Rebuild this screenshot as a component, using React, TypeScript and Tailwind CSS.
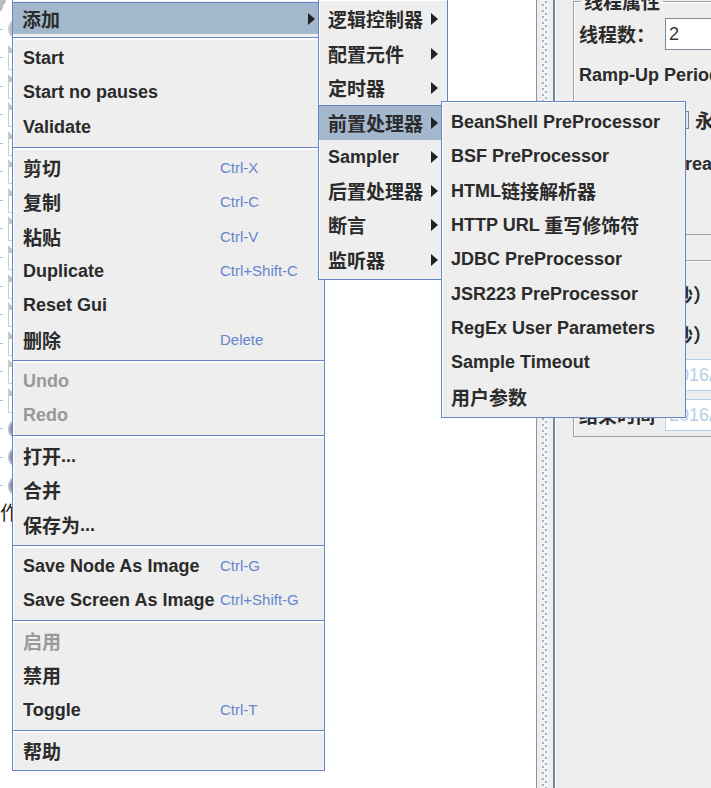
import type { ReactNode } from "react";

type Item = { label: string; accel?: string; disabled?: boolean; active?: boolean; arrow?: boolean };

const groups: { size: string; items: Item[] }[] = [
  { size: "h-[110px]", items: [{ label: "Start" }, { label: "Start no pauses" }, { label: "Validate" }] },
  {
    size: "h-[213px]",
    items: [
      { label: "剪切", accel: "Ctrl-X" },
      { label: "复制", accel: "Ctrl-C" },
      { label: "粘贴", accel: "Ctrl-V" },
      { label: "Duplicate", accel: "Ctrl+Shift-C" },
      { label: "Reset Gui" },
      { label: "删除", accel: "Delete" },
    ],
  },
  { size: "h-[75px]", items: [{ label: "Undo", disabled: true }, { label: "Redo", disabled: true }] },
  { size: "h-[110px]", items: [{ label: "打开..." }, { label: "合并" }, { label: "保存为..." }] },
  {
    size: "h-[75px]",
    items: [
      { label: "Save Node As Image", accel: "Ctrl-G" },
      { label: "Save Screen As Image", accel: "Ctrl+Shift-G" },
    ],
  },
  {
    size: "h-[110px]",
    items: [{ label: "启用", disabled: true }, { label: "禁用" }, { label: "Toggle", accel: "Ctrl-T" }],
  },
  { size: "h-[40px]", items: [{ label: "帮助" }] },
];

const addItems: Item[] = [
  { label: "逻辑控制器", arrow: true },
  { label: "配置元件", arrow: true },
  { label: "定时器", arrow: true },
  { label: "前置处理器", arrow: true, active: true },
  { label: "Sampler", arrow: true },
  { label: "后置处理器", arrow: true },
  { label: "断言", arrow: true },
  { label: "监听器", arrow: true },
];

const preProcessors: Item[] = [
  { label: "BeanShell PreProcessor" },
  { label: "BSF PreProcessor" },
  { label: "HTML链接解析器" },
  { label: "HTTP URL 重写修饰符" },
  { label: "JDBC PreProcessor" },
  { label: "JSR223 PreProcessor" },
  { label: "RegEx User Parameters" },
  { label: "Sample Timeout" },
  { label: "用户参数" },
];

// Chinese runs are set one pixel larger than Latin runs, on a slightly lower baseline.
function Mixed({ text }: { text: string }) {
  return (
    <span className="whitespace-pre">
      {text.split(/([\u3000-\u9fff\uff00-\uffef]+)/).map((run, i) =>
        i % 2 ? (
          <span key={i} className="align-[-2px] text-[19px] leading-5">
            {run}
          </span>
        ) : (
          run
        ),
      )}
    </span>
  );
}

function Arrow() {
  return (
    <svg viewBox="0 0 7 12" className="ml-auto h-3 w-[7px] shrink-0 fill-[#222]" aria-hidden="true">
      <path d="M0 0 L7 6 L0 12 Z" />
    </svg>
  );
}

function Row({ item }: { item: Item }) {
  return (
    <li role="none" className="flex min-h-0 flex-1">
      <button
        type="button"
        role="menuitem"
        disabled={item.disabled}
        className={`flex w-full items-center pr-[9px] pl-[9px] text-left leading-6 ${
          item.active ? "border-t border-[#6585cc] bg-[#a3b8cc]" : ""
        } ${item.disabled ? "text-[#999]" : "text-[#2b2b2b]"}`}
      >
        <span className={item.accel ? "w-[197px] shrink-0" : "shrink-0"}>
          <Mixed text={item.label} />
        </span>
        {item.accel && <span className="text-[15px] font-normal text-[#6585cc]">{item.accel}</span>}
        {item.arrow && <Arrow />}
      </button>
    </li>
  );
}

function Menu({ label, className, children }: { label: string; className: string; children: ReactNode }) {
  return (
    <ul
      role="menu"
      aria-label={label}
      className={`absolute flex flex-col border border-[#6585cc] bg-[#eee] shadow-[inset_1px_1px_0_#fff] ${className}`}
    >
      {children}
    </ul>
  );
}

function Tree() {
  return (
    <div className="w-[536px] shrink-0 bg-white">
      <div className="flex h-[15px] items-start">
        <svg viewBox="0 0 7 13" className="h-[13px] w-[7px]" aria-hidden="true">
          <path d="M0 0 H6 L5 4 L3 5 L3 8 L0 12 Z" fill="#bbb" />
        </svg>
      </div>
      <ul className="flex h-[485px] flex-col">
        {Array.from({ length: 17 }, (_, i) => (
          <li key={i} className="flex flex-1 items-center gap-[5px]">
            <span className="h-px w-[3px] bg-[#9fc0ea]" />
            {i === 0 || i > 13 ? (
              <svg viewBox="0 0 18 20" className="h-5 w-[18px]" aria-hidden="true">
                <ellipse cx="9" cy="10" rx="8" ry="9" fill={i ? "#8d8dab" : "#bbb"} stroke={i ? "#b8b8cc" : "#ccc"} strokeWidth="2" />
              </svg>
            ) : (
              <svg viewBox="0 0 18 25" className="h-[25px] w-[18px]" aria-hidden="true">
                <path d="M.5 .5 V24.5 H17.5" fill="none" stroke="#ccc" />
                <path d="M1 1 V8 H5 V5 Z" fill="#c4c4c4" />
              </svg>
            )}
          </li>
        ))}
      </ul>
      <span className="block text-[19px] leading-7 font-normal text-[#222]">作</span>
    </div>
  );
}

function Splitter() {
  return (
    <div className="flex w-[19px] shrink-0 justify-center border-r-2 border-l border-r-[#7389a5] border-l-[#8497ae] bg-[#eee]">
      <svg className="h-full w-[6px]" aria-hidden="true">
        <defs>
          <pattern id="grip" width="6" height="6" patternUnits="userSpaceOnUse">
            <rect width="6" height="6" fill="#f4f4f4" />
            <rect x="0" y="4" width="2" height="2" fill="#a3b1c2" />
            <rect x="3" y="1" width="2" height="2" fill="#a3b1c2" />
          </pattern>
        </defs>
        <rect width="6" height="100%" fill="url(#grip)" />
      </svg>
    </div>
  );
}

type FieldProps = { id: string; label: string; value: string; disabled?: boolean; wide?: boolean };

function Field({ id, label, value, disabled, wide }: FieldProps) {
  return (
    <div className="flex h-10 items-center">
      <label htmlFor={id} className={`shrink-0 ${wide ? "w-40" : "w-[86px]"}`}>
        <Mixed text={label} />
      </label>
      <input
        id={id}
        defaultValue={value}
        disabled={disabled}
        className={`h-8 w-40 shrink-0 border bg-white px-[3px] font-normal ${
          disabled ? "border-[#b8cfe5] text-[#b8cfe5]" : "border-[#7a8a99] text-[#333]"
        }`}
      />
    </div>
  );
}

function Check({ id, label, className }: { id: string; label: string; className: string }) {
  return (
    <div className={`flex items-center ${className}`}>
      <input id={id} type="checkbox" className="size-[18px] shrink-0 appearance-none border border-[#7a8a99] bg-[#dde8f3]" />
      <label htmlFor={id}>
        <Mixed text={label} />
      </label>
    </div>
  );
}

const box = "min-w-0 border border-r-0 border-[#a0a0a0] pl-[5px] shadow-[inset_1px_1px_0_#fff]";

function Settings() {
  return (
    <form className="min-w-0 flex-1 overflow-hidden bg-[#eee] pl-[18px] whitespace-nowrap text-[#2b2b2b] shadow-[inset_1px_0_0_#fff]">
      <fieldset className={`-mt-[11px] h-[246px] pt-px ${box}`}>
        <legend className="ml-[2px] px-[3px] leading-6">
          <Mixed text="线程属性" />
        </legend>
        <Field id="threads" label="线程数：" value="2" />
        <div className="flex h-[42px] items-center">
          <label htmlFor="ramp">Ramp-Up Period (in seconds):</label>
          <input id="ramp" defaultValue="1" className="ml-2 h-8 w-20 shrink-0 border border-[#7a8a99] bg-white" />
        </div>
        <div className="flex h-12 items-center">
          <span className="w-[92px] shrink-0">
            <Mixed text="循环次数" />
          </span>
          <Check id="forever" label="永远" className="gap-[6px]" />
        </div>
        <Check id="delay" label="Delay Thread creation until needed" className="h-10 gap-[13px]" />
      </fieldset>
      <fieldset className={`mt-[13px] h-[189px] pt-[3px] ${box}`}>
        <legend className="ml-[2px] px-[3px] leading-6">
          <Mixed text="调度器配置" />
        </legend>
        <Field id="duration" label="持续时间（秒）" value="" wide />
        <Field id="delay-start" label="启动延迟（秒）" value="" wide />
        <Field id="start-time" label="启动时间" value="2016/09/01" disabled />
        <Field id="end-time" label="结束时间" value="2016/09/01" disabled />
      </fieldset>
    </form>
  );
}

export default function App() {
  return (
    <div className="relative flex h-screen overflow-hidden bg-white font-['Liberation_Sans','Noto_Sans_CJK_SC',sans-serif] text-lg font-bold">
      <Tree />
      <Splitter />
      <Settings />

      <Menu label="线程组" className="-top-px left-3 w-[313px]">
        <li role="none" className="flex h-[37px] flex-col pt-[2px] pb-[3px]">
          <ul role="none" className="flex flex-1">
            <Row item={{ label: "添加", arrow: true, active: true }} />
          </ul>
        </li>
        {groups.map((group, i) => (
          <li key={i} role="none" className={`border-t border-[#6585cc] ${group.size}`}>
            <ul role="group" className="flex h-full flex-col border-t-2 border-l border-white pt-px pb-[3px]">
              {group.items.map((item) => (
                <Row key={item.label} item={item} />
              ))}
            </ul>
          </li>
        ))}
      </Menu>

      <Menu label="添加" className="top-0 left-[318px] h-[280px] w-[130px] border-t-0 pt-[2px] pb-[2px]">
        {addItems.map((item) => (
          <Row key={item.label} item={item} />
        ))}
      </Menu>

      <Menu label="前置处理器" className="top-[101px] left-[441px] h-[317px] w-[245px] pt-[3px] pb-[3px]">
        {preProcessors.map((item) => (
          <Row key={item.label} item={item} />
        ))}
      </Menu>
    </div>
  );
}
